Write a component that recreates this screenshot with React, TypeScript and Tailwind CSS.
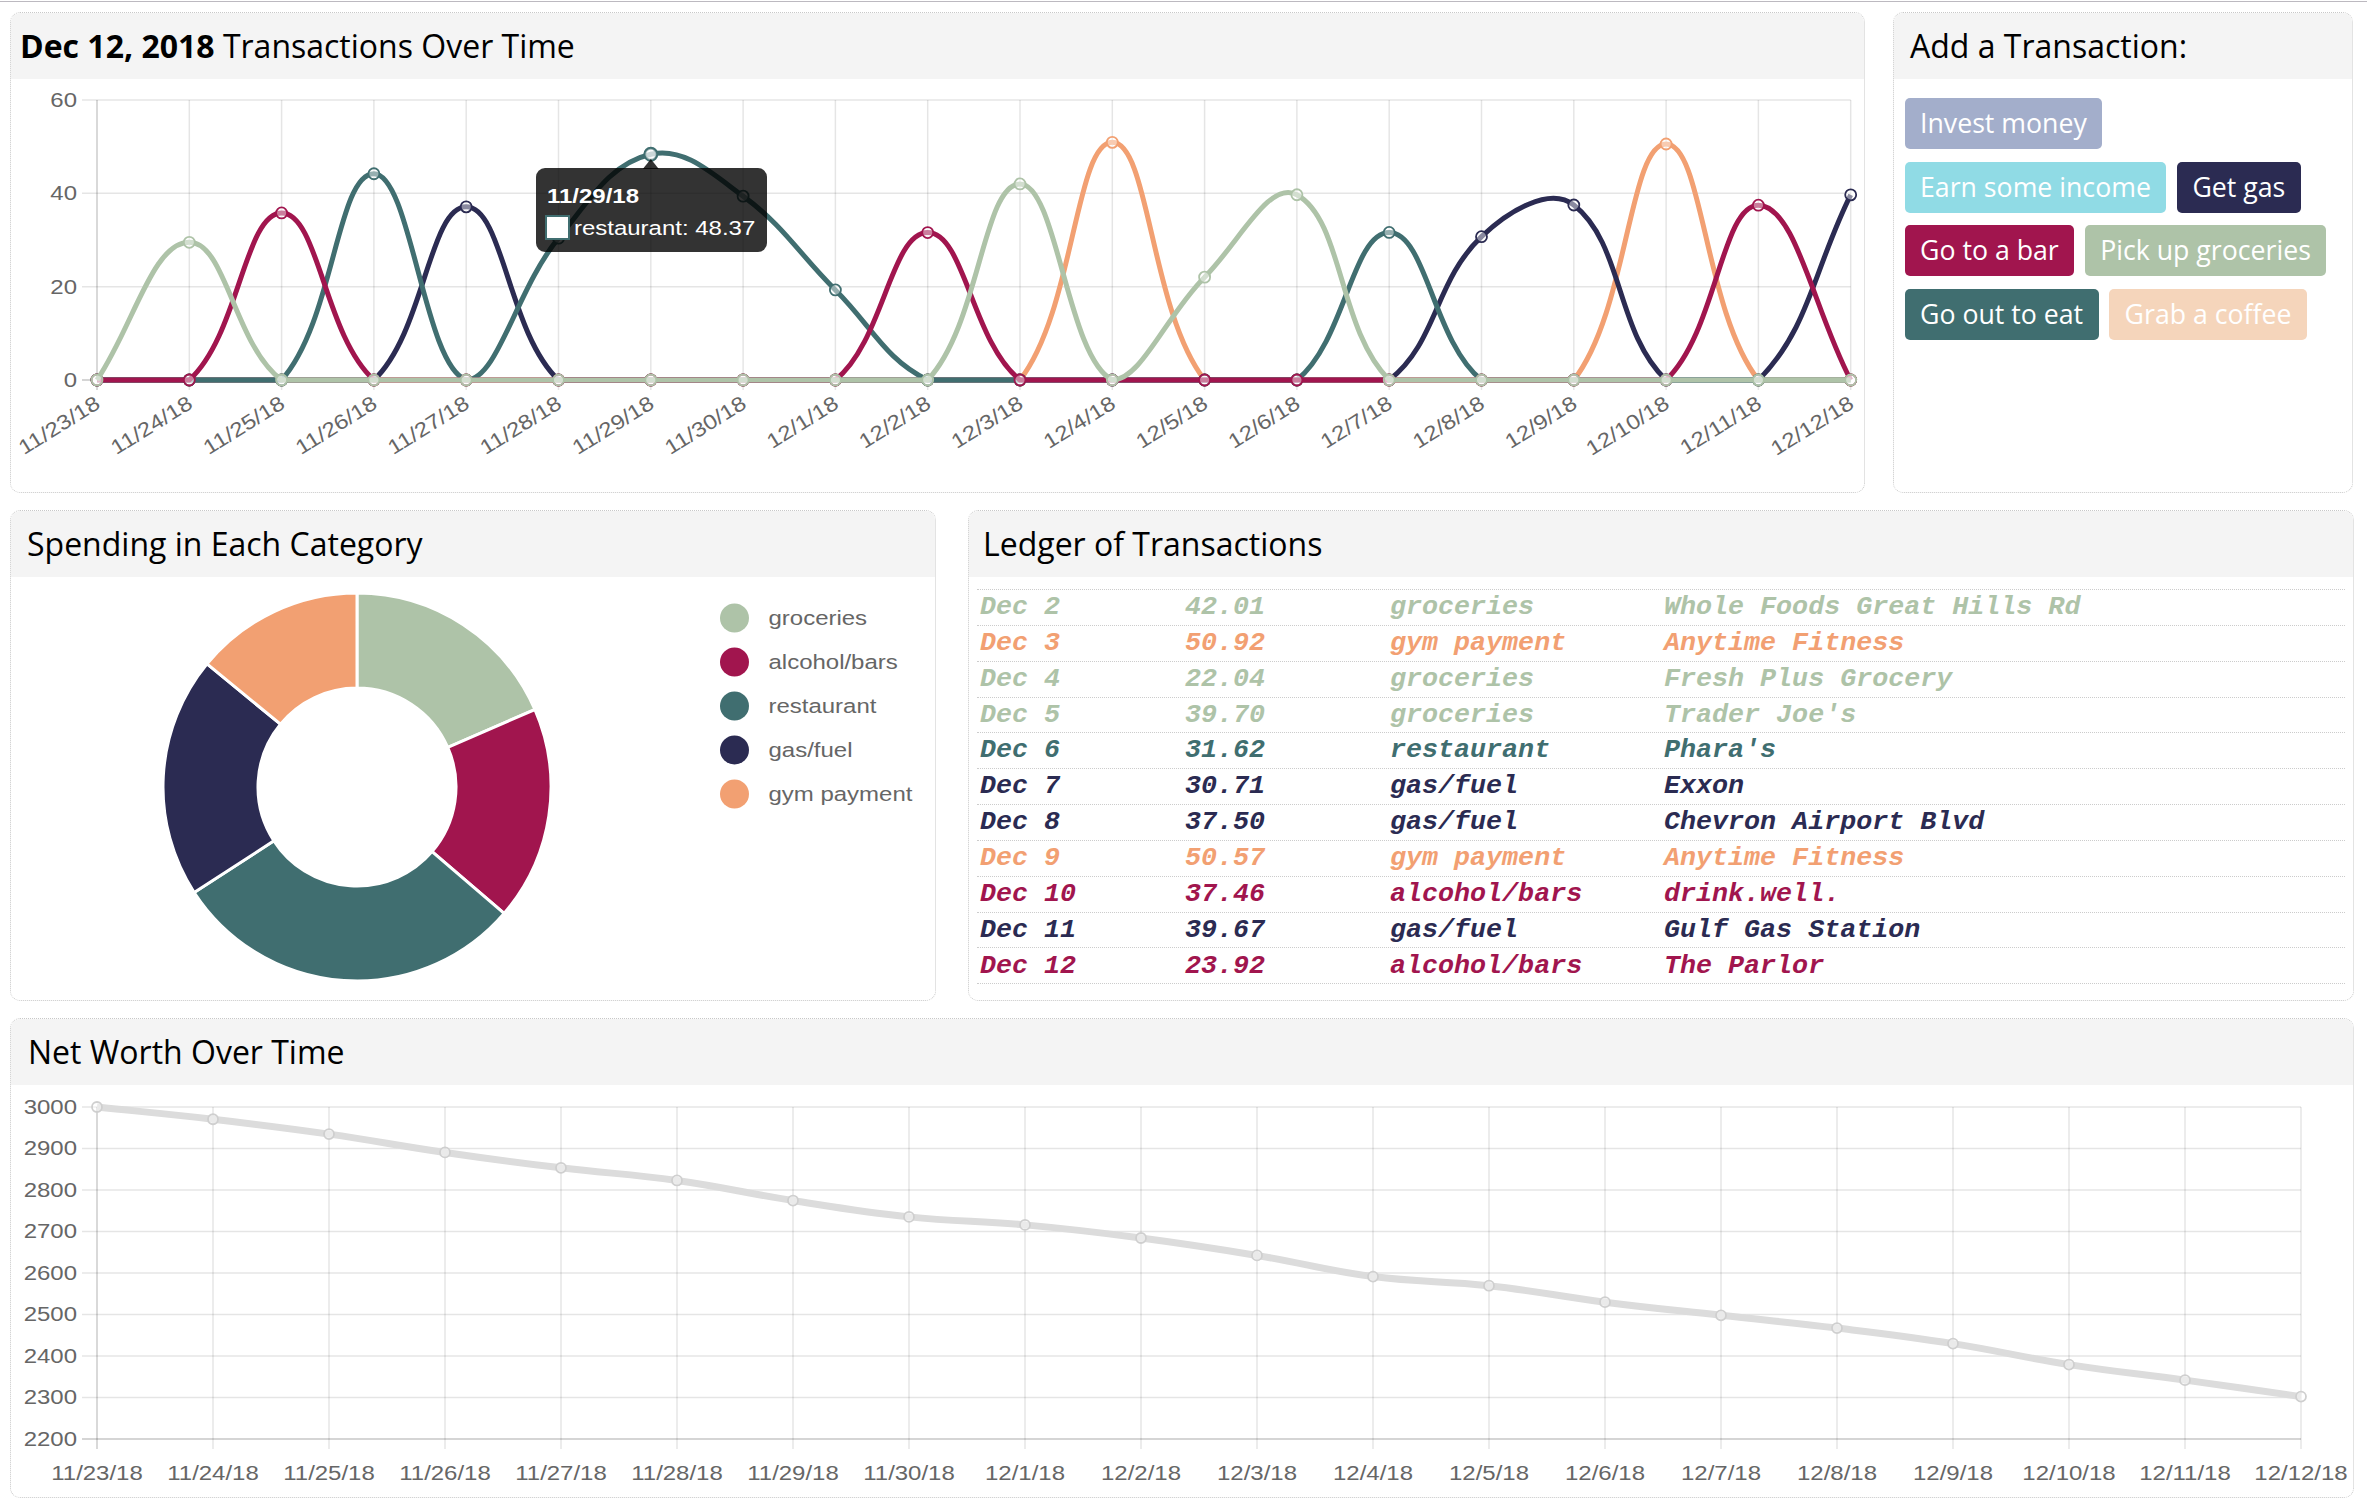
import React from 'react';

const COL = { gro: '#aec3a8', alc: '#a1154e', res: '#406e70', gas: '#2b2b52', gym: '#f2a072' };

const LABELS = ['11/23/18','11/24/18','11/25/18','11/26/18','11/27/18','11/28/18','11/29/18','11/30/18','12/1/18','12/2/18','12/3/18','12/4/18','12/5/18','12/6/18','12/7/18','12/8/18','12/9/18','12/10/18','12/11/18','12/12/18'];

const SERIES = [
  { name: 'groceries', color: COL.gro, data: [0, 29.5, 0, 0, 0, 0, 0, 0, 0, 0, 42.01, 0, 22.04, 39.7, 0, 0, 0, 0, 0, 0] },
  { name: 'alcohol/bars', color: COL.alc, data: [0, 0, 35.8, 0, 0, 0, 0, 0, 0, 31.6, 0, 0, 0, 0, 0, 0, 0, 0, 37.46, 0] },
  { name: 'restaurant', color: COL.res, data: [0, 0, 0, 44.2, 0, 30.4, 48.37, 39.4, 19.3, 0, 0, 0, 0, 0, 31.62, 0, 0, 0, 0, 0] },
  { name: 'gas/fuel', color: COL.gas, data: [0, 0, 0, 0, 37.1, 0, 0, 0, 0, 0, 0, 0, 0, 0, 0, 30.71, 37.5, 0, 0, 39.67] },
  { name: 'gym payment', color: COL.gym, data: [0, 0, 0, 0, 0, 0, 0, 0, 0, 0, 0, 50.92, 0, 0, 0, 0, 0, 50.57, 0, 0] },
];

const DONUT = [
  { name: 'groceries', color: COL.gro, v: 133.25 },
  { name: 'alcohol/bars', color: COL.alc, v: 128.78 },
  { name: 'restaurant', color: COL.res, v: 213.29 },
  { name: 'gas/fuel', color: COL.gas, v: 144.98 },
  { name: 'gym payment', color: COL.gym, v: 101.49 },
];

const LEDGER: [string, string, string, string, string][] = [
  ['Dec 2', '42.01', 'groceries', 'Whole Foods Great Hills Rd', COL.gro],
  ['Dec 3', '50.92', 'gym payment', 'Anytime Fitness', COL.gym],
  ['Dec 4', '22.04', 'groceries', 'Fresh Plus Grocery', COL.gro],
  ['Dec 5', '39.70', 'groceries', "Trader Joe's", COL.gro],
  ['Dec 6', '31.62', 'restaurant', "Phara's", COL.res],
  ['Dec 7', '30.71', 'gas/fuel', 'Exxon', COL.gas],
  ['Dec 8', '37.50', 'gas/fuel', 'Chevron Airport Blvd', COL.gas],
  ['Dec 9', '50.57', 'gym payment', 'Anytime Fitness', COL.gym],
  ['Dec 10', '37.46', 'alcohol/bars', 'drink.well.', COL.alc],
  ['Dec 11', '39.67', 'gas/fuel', 'Gulf Gas Station', COL.gas],
  ['Dec 12', '23.92', 'alcohol/bars', 'The Parlor', COL.alc],
];

const BUTTONS = [
  { label: 'Invest money', cls: 'bg-[#a3aecb]' },
  { label: 'Earn some income', cls: 'bg-[#90dbe5]' },
  { label: 'Get gas', cls: 'bg-[#2b2b52]' },
  { label: 'Go to a bar', cls: 'bg-[#a1154e]' },
  { label: 'Pick up groceries', cls: 'bg-[#aec3a8]' },
  { label: 'Go out to eat', cls: 'bg-[#406e70]' },
  { label: 'Grab a coffee', cls: 'bg-[#f5d5bb]' },
];

type Pt = { x: number; y: number };
type Area = { l: number; r: number; t: number; b: number };

function spline(pts: Pt[], area: Area, tension = 0.4) {
  const cap = (v: number, min: number, max: number) => Math.max(Math.min(v, max), min);
  const cp = pts.map((cur, i) => {
    const prev = i > 0 ? pts[i - 1] : cur;
    const next = i < pts.length - 1 ? pts[i + 1] : cur;
    const d01 = Math.hypot(cur.x - prev.x, cur.y - prev.y);
    const d12 = Math.hypot(next.x - cur.x, next.y - cur.y);
    let s01 = d01 / (d01 + d12);
    let s12 = d12 / (d01 + d12);
    if (!isFinite(s01)) s01 = 0;
    if (!isFinite(s12)) s12 = 0;
    const fa = tension * s01;
    const fb = tension * s12;
    return {
      px: cap(cur.x - fa * (next.x - prev.x), area.l, area.r),
      py: cap(cur.y - fa * (next.y - prev.y), area.t, area.b),
      nx: cap(cur.x + fb * (next.x - prev.x), area.l, area.r),
      ny: cap(cur.y + fb * (next.y - prev.y), area.t, area.b),
    };
  });
  let d = `M${pts[0].x},${pts[0].y}`;
  for (let i = 1; i < pts.length; i++) {
    d += ` C${cp[i - 1].nx},${cp[i - 1].ny} ${cp[i].px},${cp[i].py} ${pts[i].x},${pts[i].y}`;
  }
  return d;
}

const SX = 1.17;
const FONT = "'Liberation Sans', Arial, Helvetica, sans-serif";

function T({ x, y, anchor = 'start', rot = 0, fill = '#666', bold = false, size = 20.5, children }: {
  x: number; y: number; anchor?: 'start' | 'middle' | 'end'; rot?: number; fill?: string; bold?: boolean; size?: number; children: React.ReactNode;
}) {
  return (
    <text
      transform={`translate(${x} ${y}) rotate(${rot}) scale(${SX} 1)`}
      textAnchor={anchor}
      dominantBaseline="central"
      fontSize={size}
      fontFamily={FONT}
      fontWeight={bold ? 700 : 400}
      fill={fill}
    >
      {children}
    </text>
  );
}

function TxChart() {
  const X0 = 97, DX = 92.3, YB = 380, YT = 100, K = 4.6667;
  const xs = LABELS.map((_, i) => X0 + i * DX);
  const area: Area = { l: X0, r: xs[19], t: YT, b: YB };
  const grid = 'rgba(0,0,0,0.1)';
  const order = [...SERIES].reverse();
  const tipX = xs[6];
  const tipY = YB - 48.37 * K;
  return (
    <svg width={1853} height={413} viewBox="11 79 1853 413" className="block">
      {[0, 20, 40, 60].map((v) => (
        <line key={v} x1={82} x2={xs[19]} y1={YB - v * K} y2={YB - v * K} stroke={v === 0 ? 'rgba(0,0,0,0.22)' : grid} strokeWidth={1.5} />
      ))}
      {xs.map((x, i) => (
        <line key={i} x1={x} x2={x} y1={YT} y2={YB + 10} stroke={i === 0 ? 'rgba(0,0,0,0.2)' : grid} strokeWidth={1.5} />
      ))}
      {[0, 20, 40, 60].map((v) => (
        <T key={v} x={77} y={YB - v * K} anchor="end">{v}</T>
      ))}
      {LABELS.map((l, i) => (
        <T key={l} x={xs[i] + 1} y={401} anchor="end" rot={-32}>{l}</T>
      ))}
      {order.map((s) => {
        const pts = s.data.map((v, i) => ({ x: xs[i], y: YB - v * K }));
        return (
          <g key={s.name}>
            <path d={spline(pts, area)} fill="none" stroke={s.color} strokeWidth={5} />
            {pts.map((p, i) => (
              <circle key={i} cx={p.x} cy={p.y} r={5.5} fill="rgba(255,255,255,0.45)" stroke={s.color} strokeWidth={1.8} />
            ))}
          </g>
        );
      })}
      <circle cx={tipX} cy={tipY} r={6.5} fill="rgba(255,255,255,0.5)" stroke={COL.res} strokeWidth={2} />
      <path d={`M${tipX - 8},169 L${tipX},159 L${tipX + 8},169 Z`} fill="rgba(0,0,0,0.8)" />
      <rect x={536} y={168} width={231} height={84} rx={9} fill="rgba(0,0,0,0.8)" />
      <T x={547} y={196} fill="#fff" bold>11/29/18</T>
      <rect x={546} y={216} width={23} height={23} fill="#fff" stroke={COL.res} strokeWidth={2} />
      <T x={574} y={228} fill="#fff">restaurant: 48.37</T>
    </svg>
  );
}

function DonutChart() {
  const cx = 357, cy = 787, R = 194, r = 99;
  const total = DONUT.reduce((a, d) => a + d.v, 0);
  const p = (rad: number, a: number) => [cx + rad * Math.sin((a * Math.PI) / 180), cy - rad * Math.cos((a * Math.PI) / 180)];
  let acc = 0;
  const arcs = DONUT.map((d) => {
    const a0 = acc;
    const a1 = acc + (d.v / total) * 360;
    acc = a1;
    const large = a1 - a0 > 180 ? 1 : 0;
    const [x0, y0] = p(R, a0);
    const [x1, y1] = p(R, a1);
    const [x2, y2] = p(r, a1);
    const [x3, y3] = p(r, a0);
    return { ...d, path: `M${x0},${y0} A${R},${R} 0 ${large} 1 ${x1},${y1} L${x2},${y2} A${r},${r} 0 ${large} 0 ${x3},${y3} Z` };
  });
  return (
    <svg width={924} height={423} viewBox="11 577 924 423" className="block">
      {arcs.map((a) => (
        <path key={a.name} d={a.path} fill={a.color} stroke="#fff" strokeWidth={3} />
      ))}
      {DONUT.map((d, i) => (
        <g key={d.name}>
          <circle cx={734.5} cy={618 + i * 44} r={14.5} fill={d.color} />
          <T x={768.5} y={618 + i * 44}>{d.name}</T>
        </g>
      ))}
    </svg>
  );
}

function NetWorthChart() {
  const X0 = 97, DX = 116, Y3000 = 1107, KY = 0.415;
  const xs = LABELS.map((_, i) => X0 + i * DX);
  const totals = LABELS.map((_, i) => SERIES.reduce((a, s) => a + s.data[i], 0));
  let nw = 3000;
  const vals = totals.map((t) => (nw -= t));
  const yv = (v: number) => Y3000 + (3000 - v) * KY;
  const pts = vals.map((v, i) => ({ x: xs[i], y: yv(v) }));
  const area: Area = { l: X0, r: xs[19], t: Y3000, b: yv(2200) };
  const ticks = [3000, 2900, 2800, 2700, 2600, 2500, 2400, 2300, 2200];
  const grid = 'rgba(0,0,0,0.1)';
  return (
    <svg width={2342} height={412} viewBox="11 1085 2342 412" className="block">
      {ticks.map((v) => (
        <line key={v} x1={82} x2={xs[19]} y1={yv(v)} y2={yv(v)} stroke={v === 2200 ? 'rgba(0,0,0,0.22)' : grid} strokeWidth={1.5} />
      ))}
      {xs.map((x, i) => (
        <line key={i} x1={x} x2={x} y1={Y3000} y2={yv(2200) + 10} stroke={i === 0 ? 'rgba(0,0,0,0.2)' : grid} strokeWidth={1.5} />
      ))}
      {ticks.map((v) => (
        <T key={v} x={77} y={yv(v)} anchor="end">{v}</T>
      ))}
      {LABELS.map((l, i) => (
        <T key={l} x={xs[i]} y={1473} anchor="middle">{l}</T>
      ))}
      <path d={spline(pts, area)} fill="none" stroke="#dcdcdc" strokeWidth={7} />
      {pts.map((p, i) => (
        <circle key={i} cx={p.x} cy={p.y} r={5} fill="rgba(255,255,255,0.4)" stroke="#cfcfcf" strokeWidth={1.8} />
      ))}
    </svg>
  );
}

function Card({ title, cls, pad, children }: { title: React.ReactNode; cls: string; pad: string; children?: React.ReactNode }) {
  return (
    <div className={`shrink-0 rounded-[10px] border border-dotted border-[#c8c8c8] overflow-hidden bg-white ${cls}`}>
      <div className={`h-[66px] bg-[#f4f4f4] flex items-center text-[32px] leading-none text-black font-['Open_Sans',sans-serif] whitespace-nowrap ${pad}`}>
        {title}
      </div>
      {children}
    </div>
  );
}

export default function App() {
  return (
    <div className="w-[2367px] h-[1512px] bg-white overflow-hidden">
      <div className="mt-px h-px bg-[#bcb9c0]" />
      <div className="pl-[10px] pt-[10px]">
        <div className="flex gap-[28px] h-[481px]">
          <Card
            cls="w-[1855px] h-[481px]"
            pad="pl-[9px]"
            title={
              <span>
                <span className="font-bold">Dec 12, 2018</span> Transactions Over Time
              </span>
            }
          >
            <TxChart />
          </Card>
          <Card cls="w-[460px] h-[481px]" pad="pl-[16px]" title="Add a Transaction:">
            <div className="flex flex-wrap gap-x-[10.5px] gap-y-[12.5px] pl-[10.5px] pr-[9px] pt-[19px]">
              {BUTTONS.map((b) => (
                <div
                  key={b.label}
                  className={`h-[51px] px-[15.5px] rounded-[5px] flex items-center text-[26.7px] leading-none text-white whitespace-nowrap font-['Open_Sans',sans-serif] ${b.cls}`}
                >
                  {b.label}
                </div>
              ))}
            </div>
          </Card>
        </div>
        <div className="flex gap-[32px] mt-[17px] h-[491px]">
          <Card cls="w-[926px] h-[491px]" pad="pl-[16px]" title="Spending in Each Category">
            <DonutChart />
          </Card>
          <Card cls="w-[1386px] h-[491px]" pad="pl-[14px]" title="Ledger of Transactions">
            <div className="pl-[8px] pr-[8px] pt-[12px]">
              <div className="border-b-[1.5px] border-dotted border-[#cccccc]">
                {LEDGER.map((row, i) => (
                  <div
                    key={i}
                    className="grid grid-cols-[205px_205px_274px_1fr] h-[35.85px] items-center pl-[3px] border-t-[1.5px] border-dotted border-[#cccccc] font-['Liberation_Mono','Courier_New',monospace] font-bold italic text-[26.7px] leading-none whitespace-pre"
                    style={{ color: row[4] }}
                  >
                    <span>{row[0]}</span>
                    <span>{row[1]}</span>
                    <span>{row[2]}</span>
                    <span>{row[3]}</span>
                  </div>
                ))}
              </div>
            </div>
          </Card>
        </div>
        <div className="mt-[17px]">
          <Card cls="w-[2344px] h-[480px]" pad="pl-[17px]" title="Net Worth Over Time">
            <NetWorthChart />
          </Card>
        </div>
      </div>
    </div>
  );
}
